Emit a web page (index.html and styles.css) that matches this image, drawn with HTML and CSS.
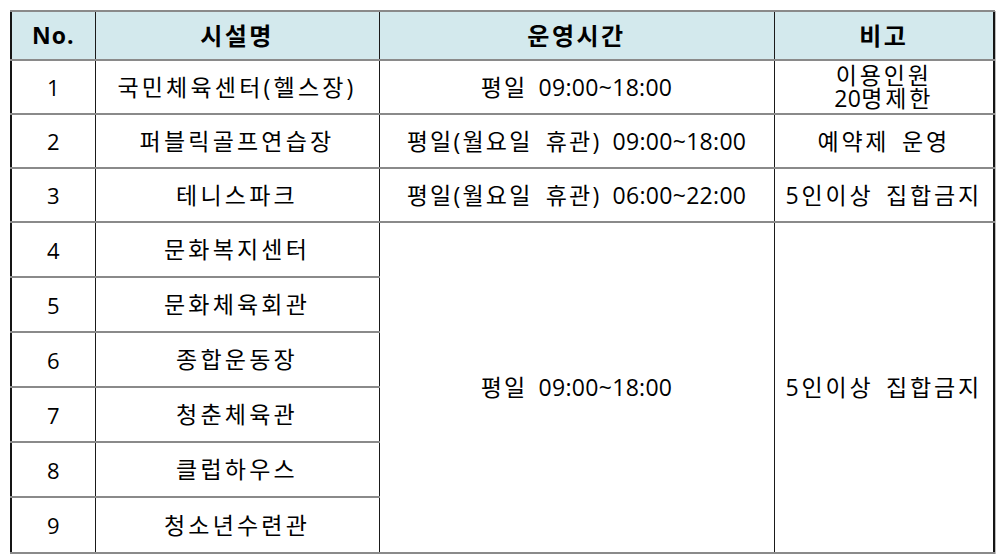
FILE: index.html
```html
<!DOCTYPE html>
<html lang="ko">
<head>
<meta charset="utf-8">
<title>시설 운영 안내</title>
<link rel="stylesheet" href="styles.css">
</head>
<body>
<table class="facility">
  <colgroup>
    <col class="c-no">
    <col class="c-name">
    <col class="c-time">
    <col class="c-note">
  </colgroup>
  <thead>
    <tr class="head">
      <th class="no">No.</th>
      <th>시설명</th>
      <th>운영시간</th>
      <th>비고</th>
    </tr>
  </thead>
  <tbody>
    <tr class="r54">
      <td class="num">1</td>
      <td>국민체육센터(헬스장)</td>
      <td class="time">평일 <span class="t">09:00~18:00</span></td>
      <td class="note two">이용인원<br><span class="n">20</span>명제한</td>
    </tr>
    <tr class="r54">
      <td class="num">2</td>
      <td>퍼블릭골프연습장</td>
      <td class="time">평일(월요일 휴관) <span class="t">09:00~18:00</span></td>
      <td class="note">예약제 운영</td>
    </tr>
    <tr class="r54">
      <td class="num">3</td>
      <td>테니스파크</td>
      <td class="time">평일(월요일 휴관) <span class="t">06:00~22:00</span></td>
      <td class="note">5인이상 집합금지</td>
    </tr>
    <tr class="r55">
      <td class="num">4</td>
      <td>문화복지센터</td>
      <td class="time" rowspan="6">평일 <span class="t">09:00~18:00</span></td>
      <td class="note" rowspan="6">5인이상 집합금지</td>
    </tr>
    <tr class="r55">
      <td class="num">5</td>
      <td>문화체육회관</td>
    </tr>
    <tr class="r55">
      <td class="num">6</td>
      <td>종합운동장</td>
    </tr>
    <tr class="r55">
      <td class="num">7</td>
      <td>청춘체육관</td>
    </tr>
    <tr class="r55">
      <td class="num">8</td>
      <td>클럽하우스</td>
    </tr>
    <tr class="r55 last">
      <td class="num">9</td>
      <td>청소년수련관</td>
    </tr>
  </tbody>
</table>
</body>
</html>
```

FILE: styles.css
```css
html, body {
  margin: 0;
  padding: 0;
  background: #ffffff;
}

body {
  font-family: "Open Sans", "Noto Sans CJK KR", sans-serif;
  color: #000;
}

.facility {
  margin: 10px 0 0 10px;
  width: 983px;
  border-collapse: collapse;
  table-layout: fixed;
  border: 2px solid #151515;
  box-shadow: 1px 1px 0 #bdbdbd;
}

.c-no { width: 84px; }
.c-name { width: 284px; }
.c-time { width: 395px; }
.c-note { width: 220px; }

.facility th,
.facility td {
  text-align: center;
  vertical-align: middle;
  padding: 0;
  border-left: 1px solid #1a1a1a;
  border-right: 1px solid #1a1a1a;
  border-top: 2px solid #8a8a8a;
  border-bottom: 2px solid #8a8a8a;
  line-height: 1;
  white-space: nowrap;
}

.head th {
  height: 47px;
  background: #d3e9ed;
  font-weight: 700;
  font-size: 24px;
  letter-spacing: 2.5px;
  border-bottom: 1px solid #1a1a1a;
}

.head th.no {
  font-size: 23px;
  letter-spacing: 1px;
}

.r54 td { height: 52px; }
.r55 td { height: 53px; }
.r55.last td { height: 54px; }

.facility td {
  font-weight: 400;
  font-size: 23px;
  letter-spacing: 3.2px;
  word-spacing: 3px;
}

.facility td.num {
  font-size: 22px;
  letter-spacing: 0;
}

.facility td.time {
  letter-spacing: 2.2px;
  word-spacing: 5px;
}

.facility td.note {
  letter-spacing: 2.8px;
  word-spacing: 4px;
}

.t {
  letter-spacing: 0.3px;
  margin-left: -2px;
}

.n {
  letter-spacing: 0.3px;
}

.two {
  line-height: 1.04;
  padding-bottom: 4px;
}
```
